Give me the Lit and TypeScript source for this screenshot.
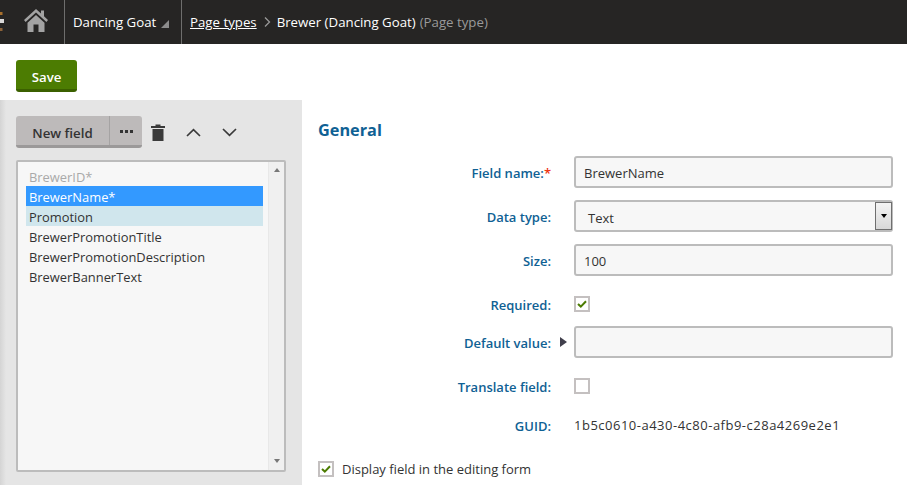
import { LitElement, html, css } from "lit";
import { customElement } from "lit/decorators.js";

@customElement("app-root")
export class AppRoot extends LitElement {
  static styles = css`
    :host { display: block; width: 907px; height: 485px; overflow: hidden; background: #fff; font-family: "Open Sans", "Noto Sans", sans-serif; font-size: 13px; color: #333; }
    .top { height: 44px; background: #262524; display: flex; align-items: center; color: #fff; font-size: 13.25px; }
    .gear { width: 4px; height: 20px; overflow: hidden; flex: none; }
    .gear svg { display: block; }
    .home { width: 60px; height: 44px; display: flex; align-items: center; padding: 0 0 4px 20px; box-sizing: border-box; flex: none; }
    .sep { width: 1px; height: 44px; background: #6e6e6d; flex: none; }
    .site { width: 116px; box-sizing: border-box; padding-left: 8px; display: flex; align-items: center; gap: 5px; flex: none; }
    .site svg { margin-top: 3px; }
    .crumbs { padding-left: 8px; display: flex; align-items: center; white-space: nowrap; }
    .chev { margin: 0 6px 0 7px; }
    .muted { color: #9a9a9a; margin-left: 4px; }
    .actions { height: 56px; padding: 16px 0 0 16px; box-sizing: border-box; }
    .save { width: 61px; height: 32px; background: #4c7c02; border-bottom: 3px solid #3b6000; border-radius: 3px; box-sizing: border-box; color: #fff; font-weight: 600; font-size: 13.25px; padding-top: 5px; display: flex; align-items: center; justify-content: center; }
    .main { display: flex; height: 385px; }
    .left { width: 302px; flex: none; background: linear-gradient(to right, #d4d4d4, #e5e5e5 6px); padding: 16px 16px 13px; box-sizing: border-box; display: flex; flex-direction: column; gap: 12px; }
    .tools { display: flex; align-items: center; height: 32px; }
    .btn { width: 126px; height: 32px; display: flex; background: #bdbaba; border-bottom: 3px solid #9b9999; border-radius: 3px; box-sizing: border-box; font-weight: 600; font-size: 13.3px; color: #333; flex: none; }
    .btn .new { width: 94px; display: flex; align-items: center; justify-content: center; border-right: 1px solid #a5a3a3; padding-top: 5px; box-sizing: border-box; }
    .btn .more { flex: 1; display: flex; align-items: center; justify-content: center; gap: 2px; padding-top: 2px; }
    .dot { width: 3px; height: 3px; background: #333; }
    .ticons { display: flex; align-items: center; }
    .ticons svg { display: block; }
    .i-trash { margin-left: 9px; }
    .i-up { margin-left: 21px; }
    .i-down { margin-left: 21px; }
    .list { flex: 1; border: 2px solid #bcbcbc; border-radius: 2px; background: #f7f7f7; display: flex; box-sizing: border-box; }
    .items { flex: 1; padding: 4px 5px 0 8px; }
    .item { height: 20px; line-height: 22px; padding-left: 3px; white-space: nowrap; font-size: 12.9px; }
    .dis { color: #a9a9a9; }
    .sel { background: #3399ff; color: #fff; }
    .hl { background: #d0e6ed; }
    .sb { width: 16px; background: #f0f0f0; border-left: 1px solid #e8e8e8; box-sizing: border-box; display: flex; flex-direction: column; justify-content: space-between; align-items: center; padding: 6px 0 7px; }
    .up { width: 0; height: 0; border: 3.5px solid transparent; border-top: 0; border-bottom: 4px solid #777; }
    .down { width: 0; height: 0; border: 3.5px solid transparent; border-bottom: 0; border-top: 4px solid #777; }
    .right { flex: 1; padding: 19px 14px 0 16px; }
    h2 { margin: 0; font-size: 16.3px; font-weight: 700; color: #0f6194; line-height: 22px; height: 37px; }
    .row { display: grid; grid-template-columns: 233px 319px; column-gap: 23px; align-items: center; min-height: 32px; margin-bottom: 12px; }
    .r3 { margin-bottom: 6px; }
    .r5 { margin-bottom: 7px; }
    .r6 { margin-bottom: 18px; }
    label { text-align: right; color: #0f6194; font-weight: 600; position: relative; padding-top: 2px; }
    .req { color: #e31; }
    .tip { position: absolute; right: -16px; top: 5px; width: 0; height: 0; border: 5.5px solid transparent; border-right: 0; border-left: 7px solid #403f4c; }
    .input { height: 32px; box-sizing: border-box; border: 2px solid #bcbcbc; border-radius: 3px; background: #f7f7f7; padding: 2px 0 0 8px; display: flex; align-items: center; color: #333; }
    .select { padding: 3px 0 0 12px; position: relative; }
    .arrow { position: absolute; right: -1px; top: 0; width: 17px; height: 28px; border: 1px solid #6f6f6f; background: linear-gradient(#f4f4f4, #d8d8d8); box-sizing: border-box; display: flex; align-items: center; justify-content: center; }
    .arrow i { width: 0; height: 0; border: 3.5px solid transparent; border-bottom: 0; border-top: 4px solid #000; }
    .cb { width: 16px; height: 16px; box-sizing: border-box; border: 2px solid #c4c0c0; background: #fff; display: flex; align-items: center; justify-content: center; }
    .guid { letter-spacing: 0.5px; }
    .display { display: flex; align-items: center; gap: 8px; }
    .display span { padding-top: 1px; }
  `;

  private check() {
    return html`<svg width="10" height="8" viewBox="0 0 10 8"><path d="M1 4 L3.8 6.6 L9 1.2" fill="none" stroke="#4c7c02" stroke-width="2"/></svg>`;
  }

  render() {
    return html`
      <div class="top">
        <div class="gear"><svg width="4" height="20" viewBox="0 0 4 20"><path d="M0 0H2.5V3H0Z" fill="#a8702c"/><path d="M0 7H4V11H0Z" fill="#d9d9d9"/><path d="M0 16H2.5V19H0Z" fill="#8c6238"/></svg></div>
        <div class="home">
          <svg width="24" height="23" viewBox="0 0 24 23"><path d="M12 0 L0 11 L1.6 13 L12 3.6 L22.4 13 L24 11 L20 7.3 V1.5 H17 V4.6Z" fill="#a3a3a3"/><path d="M12 6 L3.5 13.8 V23 H9.5 V15.5 H14.5 V23 H20.5 V13.8Z" fill="#a3a3a3"/></svg>
        </div>
        <div class="sep"></div>
        <div class="site">Dancing Goat <svg width="8" height="8" viewBox="0 0 8 8"><path d="M8 0V8H0Z" fill="#8c8c8c"/></svg></div>
        <div class="sep"></div>
        <div class="crumbs"><u>Page types</u><svg class="chev" width="7" height="10" viewBox="0 0 7 10"><path d="M1 0.5 L5.5 5 L1 9.5" fill="none" stroke="#999" stroke-width="1.3"/></svg>Brewer (Dancing Goat)<span class="muted">(Page type)</span></div>
      </div>
      <div class="actions"><div class="save">Save</div></div>
      <div class="main">
        <div class="left">
          <div class="tools">
            <div class="btn"><div class="new">New field</div><div class="more"><span class="dot"></span><span class="dot"></span><span class="dot"></span></div></div>
            <div class="ticons">
              <svg class="i-trash" width="14" height="17" viewBox="0 0 14 17"><path d="M0 2H4.5V0.5H9.5V2H14V4H0Z M1.5 5H12.5V17H1.5Z" fill="#3a3a3a"/></svg>
              <svg class="i-up" width="15" height="9" viewBox="0 0 15 9"><path d="M1 8 L7.5 1.7 L14 8" fill="none" stroke="#3a3a3a" stroke-width="1.7"/></svg>
              <svg class="i-down" width="15" height="9" viewBox="0 0 15 9"><path d="M1 1 L7.5 7.3 L14 1" fill="none" stroke="#3a3a3a" stroke-width="1.7"/></svg>
            </div>
          </div>
          <div class="list">
            <div class="items">
              <div class="item dis">BrewerID*</div>
              <div class="item sel">BrewerName*</div>
              <div class="item hl">Promotion</div>
              <div class="item">BrewerPromotionTitle</div>
              <div class="item">BrewerPromotionDescription</div>
              <div class="item">BrewerBannerText</div>
            </div>
            <div class="sb"><div class="up"></div><div class="down"></div></div>
          </div>
        </div>
        <div class="right">
          <h2>General</h2>
          <div class="row"><label>Field name:<span class="req">*</span></label><div class="input">BrewerName</div></div>
          <div class="row"><label>Data type:</label><div class="input select">Text<div class="arrow"><i></i></div></div></div>
          <div class="row"><label>Size:</label><div class="input">100</div></div>
          <div class="row r3"><label>Required:</label><div class="cb">${this.check()}</div></div>
          <div class="row"><label>Default value:<span class="tip"></span></label><div class="input"></div></div>
          <div class="row r5"><label>Translate field:</label><div class="cb"></div></div>
          <div class="row r6"><label>GUID:</label><div class="guid">1b5c0610-a430-4c80-afb9-c28a4269e2e1</div></div>
          <div class="display"><div class="cb">${this.check()}</div><span>Display field in the editing form</span></div>
        </div>
      </div>
    `;
  }
}
